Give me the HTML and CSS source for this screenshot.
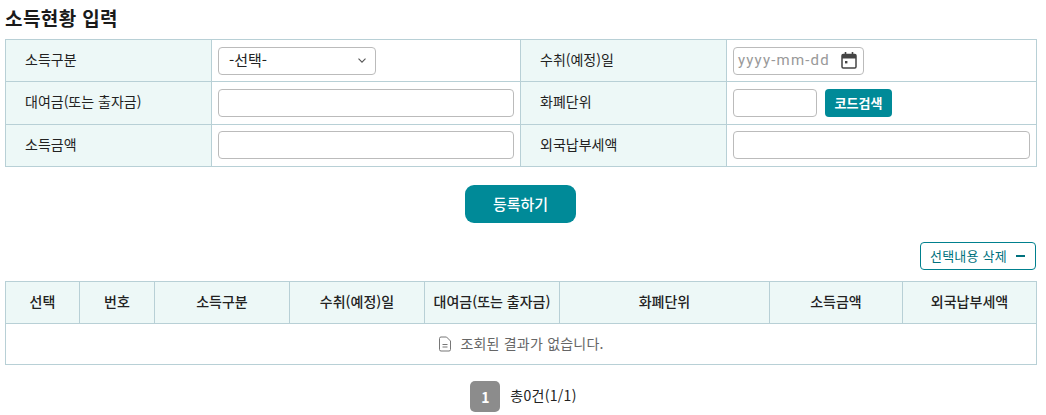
FILE: index.html
```html
<!DOCTYPE html>
<html lang="ko">
<head>
<meta charset="utf-8">
<title>소득현황 입력</title>
<link rel="stylesheet" href="styles.css">
</head>
<body>
<main class="page">
  <h2 class="title">소득현황 입력</h2>
  <table class="form-table">
    <colgroup><col class="f1"><col class="f2"><col class="f3"><col class="f4"></colgroup>
    <tbody>
      <tr class="r1">
        <th>소득구분</th>
        <td>
          <div class="select-box">
            <span>-선택-</span>
            <svg class="chev" width="8" height="5" viewBox="0 0 8 5"><path d="M.5 .7 4 4.200 7.500 .7" fill="none" stroke="#555" stroke-width="1.100"/></svg>
          </div>
        </td>
        <th>수취(예정)일</th>
        <td>
          <div class="date-box">
            <span class="ph">yyyy-mm-dd</span>
            <svg class="cal" width="16" height="17" viewBox="0 0 16 17"><path d="M4.500 0v3.500M11.500 0v3.500" stroke="#444" stroke-width="1.600" fill="none"/><rect x="1" y="2.500" width="14" height="13.500" rx="1.200" fill="none" stroke="#444" stroke-width="1.500"/><path d="M1 3h14v3.500H1z" fill="#444"/><rect x="4" y="9" width="2.400" height="2.400" fill="#444"/></svg>
          </div>
        </td>
      </tr>
      <tr class="r2">
        <th>대여금(또는 출자금)</th>
        <td><input class="inp" type="text"></td>
        <th>화폐단위</th>
        <td>
          <div class="code-row">
            <input class="inp short" type="text">
            <button class="code-btn" type="button">코드검색</button>
          </div>
        </td>
      </tr>
      <tr class="r3">
        <th>소득금액</th>
        <td><input class="inp" type="text"></td>
        <th>외국납부세액</th>
        <td><input class="inp" type="text"></td>
      </tr>
    </tbody>
  </table>
  <div class="submit-row"><button class="submit" type="button">등록하기</button></div>
  <div class="del-row">
    <button class="del" type="button">선택내용 삭제<span class="minus"></span></button>
  </div>
  <table class="list-table">
    <colgroup><col class="c1"><col class="c2"><col class="c3"><col class="c4"><col class="c5"><col class="c6"><col class="c7"><col class="c8"></colgroup>
    <thead>
      <tr>
        <th>선택</th><th>번호</th><th>소득구분</th><th>수취(예정)일</th><th>대여금(또는 출자금)</th><th>화폐단위</th><th>소득금액</th><th>외국납부세액</th>
      </tr>
    </thead>
    <tbody>
      <tr>
        <td colspan="8">
          <div class="empty">
            <svg width="14" height="16" viewBox="0 0 14 16"><path d="M1.500 2.500a1.500 1.500 0 0 1 1.500-1.500h5.500l4 4v8.500a1.500 1.500 0 0 1-1.500 1.500H3a1.500 1.500 0 0 1-1.500-1.500z" fill="none" stroke="#777" stroke-width="1"/><path d="M4.500 8.500h5M4.500 11h5" stroke="#777" stroke-width="1"/></svg>
            <span>조회된 결과가 없습니다.</span>
          </div>
        </td>
      </tr>
    </tbody>
  </table>
  <div class="pager">
    <span class="page-num">1</span>
    <span class="page-total">총0건(1/1)</span>
  </div>
</main>
</body>
</html>
```

FILE: styles.css
```css
* { box-sizing: border-box; }
html, body { margin: 0; padding: 0; background: #fff; }
body {
  font-family: "Noto Sans CJK KR", "Noto Sans", sans-serif;
  font-size: 14px;
  color: #222;
  overflow: hidden;
}
.page { width: 1036px; padding: 5px 0 0 5px; }
.title {
  margin: 0;
  height: 34px;
  font-size: 19px;
  font-weight: 700;
  line-height: 25px;
  letter-spacing: 0.4px;
  color: #1a1a1a;
}
table { border-collapse: collapse; table-layout: fixed; width: 1031px; }
.form-table th, .form-table td, .list-table th, .list-table td {
  border: 1px solid #b8d0d6;
  padding: 0;
}
.form-table th {
  background: #edf8f7;
  font-weight: 400;
  text-align: left;
  padding: 0 0 4px 19px;
  color: #222;
}
.form-table td { padding: 0 6px; }
.form-table .r3 td { padding-bottom: 1px; }
.f1 { width: 206px; }
.f2 { width: 309px; }
.f3 { width: 206px; }
.f4 { width: 310px; }
.r1 { height: 42px; }
.r2 { height: 43px; }
.r3 { height: 42px; }
.select-box, .date-box, .inp {
  height: 28px;
  border: 1px solid #bbb;
  border-radius: 4px;
  background: #fff;
  display: flex;
  align-items: center;
}
.inp { width: 100%; padding: 0 8px; font: inherit; outline: none; }
.select-box {
  width: 158px;
  justify-content: space-between;
  padding: 0 9px 2px 10px;
  font-size: 15px;
  color: #222;
}
.chev { margin-top: 2px; }
.date-box {
  width: 131px;
  justify-content: space-between;
  padding: 0 6px 0 3px;
}
.ph {
  color: #999;
  font-family: Roboto, sans-serif;
  font-size: 15px;
  letter-spacing: 1.2px;
  padding: 0 0 2px 1px;
}
.code-row { display: flex; align-items: center; gap: 8px; }
.inp.short { width: 84px; }
.code-btn {
  width: 67px;
  height: 28px;
  border: 0;
  border-radius: 4px;
  background: #008a98;
  color: #fff;
  font: 700 13px "Noto Sans CJK KR", sans-serif;
  padding: 0 0 2px;
}
.submit-row { display: flex; justify-content: center; padding-top: 18px; }
.submit {
  width: 111px;
  height: 38px;
  border: 0;
  border-radius: 9px;
  background: #008a98;
  color: #fff;
  font: 500 15px "Noto Sans CJK KR", sans-serif;
  padding: 0 0 1px;
}
.del-row { display: flex; justify-content: flex-end; padding-top: 19px; }
.del {
  display: flex;
  align-items: center;
  justify-content: space-between;
  width: 116px;
  height: 28px;
  border: 1px solid #00808e;
  border-radius: 4px;
  background: #fff;
  color: #00717e;
  font: 400 13px "Noto Sans CJK KR", sans-serif;
  letter-spacing: 0.2px;
  padding: 0 10px 2px 9px;
}
.minus { width: 9px; height: 2px; background: #00717e; margin-top: 2px; }
.list-table { margin-top: 11px; }
.c1 { width: 74px; }
.c2 { width: 75px; }
.c3 { width: 135px; }
.c4 { width: 135px; }
.c5 { width: 135px; }
.c6 { width: 210px; }
.c7 { width: 133px; }
.c8 { width: 134px; }
.list-table thead tr { height: 42px; }
.list-table th {
  background: #edf8f7;
  font-weight: 500;
  text-align: center;
  color: #222;
  white-space: nowrap;
  padding-bottom: 3px;
}
.list-table tbody tr { height: 41px; }
.empty {
  display: flex;
  align-items: center;
  justify-content: center;
  gap: 8px;
  color: #666;
  letter-spacing: 0.2px;
  padding-bottom: 1px;
}
.empty span { padding-bottom: 2px; }
.pager {
  display: flex;
  align-items: center;
  justify-content: center;
  gap: 10px;
  padding-top: 16px;
  padding-left: 6px;
}
.page-num {
  width: 30px;
  height: 31px;
  border-radius: 5px;
  background: #8c8c8c;
  color: #fff;
  font-weight: 700;
  display: flex;
  align-items: center;
  justify-content: center;
}
.page-total { color: #222; letter-spacing: 0.3px; padding-bottom: 4px; }
```
